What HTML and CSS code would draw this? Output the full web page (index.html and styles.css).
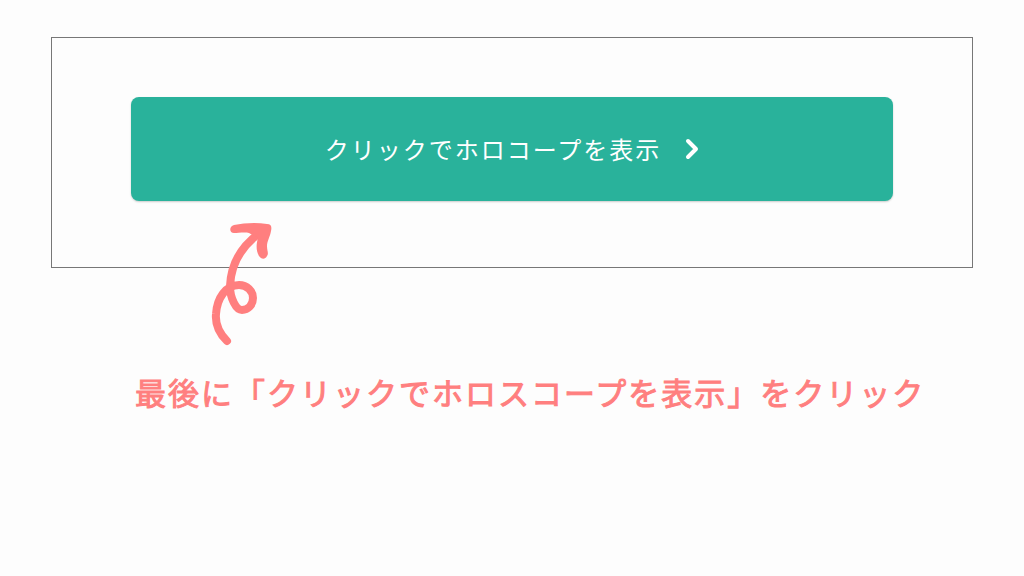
FILE: index.html
```html
<!DOCTYPE html>
<html lang="ja">
<head>
  <meta charset="UTF-8">
  <meta name="viewport" content="width=device-width, initial-scale=1.0">
  <title>ホロスコープを表示</title>
  <link rel="stylesheet" href="styles.css">
</head>
<body>

  <main class="page">
    <div class="frame">
      <button class="button" type="button">
        <span class="label">クリックでホロコープを表示</span>
        <svg class="chevron" viewBox="0 0 14 22" aria-hidden="true">
          <path d="M3 3 L11 11 L3 19"/>
        </svg>
      </button>

      <svg class="arrow" viewBox="0 0 110 150" aria-hidden="true">
        <path class="loop" d="M37 131 C29 123 25 115 26 104 C27 88 36 75 49 75 C57 75 63 81 63 88 C63 95 58 100 52 100 C46 100 40 88 40 76 C41 52 54 33 74 20"/>
        <path class="head" d="M44 15 C54 13 66 12 77 14 C81 14 82 16 81 21 C80 27 77 31 77 36 C77 41 79 43 77 46 C75 50 71 49 69 46 C66 41 66 35 68 28 L59 23 C55 22 48 23 44 23 C39 23 39 16 44 15 Z"/>
      </svg>
    </div>

    <p class="note">最後に「クリックでホロスコープを表示」をクリック</p>
  </main>

</body>
</html>
```

FILE: styles.css
```css
body {
  font-family: "Noto Sans CJK JP", sans-serif;
  background-color: #fdfdfd;
  margin: 0;
}
.page {
  padding: 37px 51px;
}
.frame {
  position: relative;
  border: 1px solid #777;
  padding: 59px 79px 66px;
}
.button {
  display: flex;
  justify-content: center;
  align-items: center;
  gap: 24px;
  width: 100%;
  padding: 32px 16px;
  border: none;
  border-radius: 8px;
  background-color: #29b29b;
  box-shadow: 0 1px 2px rgba(0, 0, 0, 0.2);
  color: #fff;
  font-family: inherit;
  font-size: 24px;
  font-weight: 400;
  line-height: 40px;
  cursor: pointer;
}
.button:hover {
  background-color: #249e8a;
}
.label {
  letter-spacing: 2px;
}
.chevron {
  width: 14px;
  height: 22px;
  fill: none;
  stroke: #fff;
  stroke-width: 4;
  stroke-linecap: round;
  stroke-linejoin: round;
}
/* hand-drawn arrow pointing at the button */
.arrow {
  position: absolute;
  left: 138px;
  top: 172px;
  width: 110px;
  height: 150px;
  pointer-events: none;
}
.loop {
  fill: none;
  stroke: #ff7f7f;
  stroke-width: 8;
  stroke-linecap: round;
}
.head {
  fill: #ff7f7f;
}
.note {
  margin: 100px 0 0;
  padding-left: 84px;
  color: #ff7f7f;
  font-size: 31px;
  font-weight: 400;
  letter-spacing: 2px;
  line-height: 48px;
  -webkit-text-stroke: 1px #ff7f7f;
}
```
